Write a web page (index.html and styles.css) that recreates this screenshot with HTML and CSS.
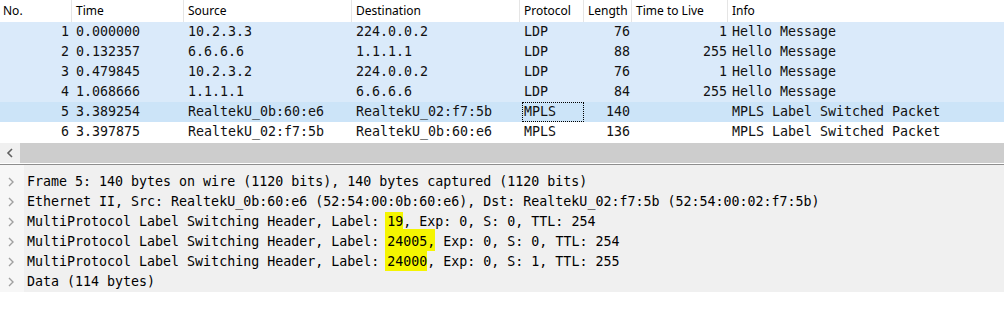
FILE: index.html
```html
<!DOCTYPE html>
<html>
<head>
<meta charset="utf-8">
<link rel="stylesheet" href="styles.css">
</head>
<body>
<div class="app">
  <div class="list">
    <div class="row hdr">
      <div class="c">No.</div>
      <div class="c">Time</div>
      <div class="c">Source</div>
      <div class="c">Destination</div>
      <div class="c">Protocol</div>
      <div class="c">Length</div>
      <div class="c">Time to Live</div>
      <div class="c last">Info</div>
    </div>
    <div class="row pkt ldp">
      <div class="c r no">1</div><div class="c">0.000000</div><div class="c">10.2.3.3</div><div class="c">224.0.0.2</div><div class="c">LDP</div><div class="c r len">76</div><div class="c r ttl">1</div><div class="c">Hello Message</div>
    </div>
    <div class="row pkt ldp">
      <div class="c r no">2</div><div class="c">0.132357</div><div class="c">6.6.6.6</div><div class="c">1.1.1.1</div><div class="c">LDP</div><div class="c r len">88</div><div class="c r ttl">255</div><div class="c">Hello Message</div>
    </div>
    <div class="row pkt ldp">
      <div class="c r no">3</div><div class="c">0.479845</div><div class="c">10.2.3.2</div><div class="c">224.0.0.2</div><div class="c">LDP</div><div class="c r len">76</div><div class="c r ttl">1</div><div class="c">Hello Message</div>
    </div>
    <div class="row pkt ldp">
      <div class="c r no">4</div><div class="c">1.068666</div><div class="c">1.1.1.1</div><div class="c">6.6.6.6</div><div class="c">LDP</div><div class="c r len">84</div><div class="c r ttl">255</div><div class="c">Hello Message</div>
    </div>
    <div class="row pkt sel">
      <div class="c r no">5</div><div class="c">3.389254</div><div class="c">RealtekU_0b:60:e6</div><div class="c">RealtekU_02:f7:5b</div><div class="c focus">MPLS</div><div class="c r len">140</div><div class="c r ttl"></div><div class="c">MPLS Label Switched Packet</div>
    </div>
    <div class="row pkt">
      <div class="c r no">6</div><div class="c">3.397875</div><div class="c">RealtekU_02:f7:5b</div><div class="c">RealtekU_0b:60:e6</div><div class="c">MPLS</div><div class="c r len">136</div><div class="c r ttl"></div><div class="c">MPLS Label Switched Packet</div>
    </div>
  </div>
  <div class="hscroll">
    <div class="arrow">
      <svg width="8" height="10" viewBox="0 0 8 10"><polyline points="6,1 2,5 6,9" fill="none" stroke="#606060" stroke-width="1.6"/></svg>
    </div>
    <div class="thumb"></div>
  </div>
  <div class="details">
    <div class="drow"><span class="chev"><svg width="8" height="10" viewBox="0 0 8 10"><polyline points="2,1 6,5 2,9" fill="none" stroke="#a0a0a0" stroke-width="1.4"/></svg></span><span class="dt">Frame 5: 140 bytes on wire (1120 bits), 140 bytes captured (1120 bits)</span></div>
    <div class="drow"><span class="chev"><svg width="8" height="10" viewBox="0 0 8 10"><polyline points="2,1 6,5 2,9" fill="none" stroke="#a0a0a0" stroke-width="1.4"/></svg></span><span class="dt">Ethernet II, Src: RealtekU_0b:60:e6 (52:54:00:0b:60:e6), Dst: RealtekU_02:f7:5b (52:54:00:02:f7:5b)</span></div>
    <div class="drow"><span class="chev"><svg width="8" height="10" viewBox="0 0 8 10"><polyline points="2,1 6,5 2,9" fill="none" stroke="#a0a0a0" stroke-width="1.4"/></svg></span><span class="dt">MultiProtocol Label Switching Header, Label: <span class="hl">19</span>, Exp: 0, S: 0, TTL: 254</span></div>
    <div class="drow"><span class="chev"><svg width="8" height="10" viewBox="0 0 8 10"><polyline points="2,1 6,5 2,9" fill="none" stroke="#a0a0a0" stroke-width="1.4"/></svg></span><span class="dt">MultiProtocol Label Switching Header, Label: <span class="hl up">24005,</span> Exp: 0, S: 0, TTL: 254</span></div>
    <div class="drow"><span class="chev"><svg width="8" height="10" viewBox="0 0 8 10"><polyline points="2,1 6,5 2,9" fill="none" stroke="#a0a0a0" stroke-width="1.4"/></svg></span><span class="dt">MultiProtocol Label Switching Header, Label: <span class="hl up">24000</span>, Exp: 0, S: 1, TTL: 255</span></div>
    <div class="drow"><span class="chev"><svg width="8" height="10" viewBox="0 0 8 10"><polyline points="2,1 6,5 2,9" fill="none" stroke="#a0a0a0" stroke-width="1.4"/></svg></span><span class="dt">Data (114 bytes)</span></div>
  </div>
</div>
</body>
</html>
```
FILE: styles.css
```css
html, body {
  margin: 0;
  padding: 0;
  background: #ffffff;
}
.app {
  width: 1004px;
  height: 325px;
  overflow: hidden;
  display: flex;
  flex-direction: column;
}
.list {
  display: flex;
  flex-direction: column;
  height: 143px;
  background: #ffffff;
}
.row {
  display: grid;
  grid-template-columns: 72px 112px 168px 168px 64px 48px 96px 1fr;
  height: 20px;
}
.hdr {
  height: 22px;
  font-family: "Noto Sans", "Open Sans", sans-serif;
  font-size: 12px;
  color: #000;
  background: #fff;
}
.hdr .c {
  line-height: 21px;
  padding-left: 4px;
  border-right: 1px solid #e5e5e5;
}
.hdr .c:first-child {
  padding-left: 3px;
}
.hdr .c.last {
  border-right: none;
}
.pkt {
  font-family: "DejaVu Sans Mono", "Liberation Mono", monospace;
  font-size: 13.3px;
  color: #111;
}
.pkt .c {
  line-height: 20px;
  padding-left: 4px;
  white-space: nowrap;
  overflow: hidden;
  box-sizing: border-box;
}
.pkt .c.r {
  text-align: right;
  padding-left: 0;
  padding-right: 2px;
}
.pkt .c.no {
  padding-right: 3px;
}
.pkt .c.ttl {
  padding-right: 1px;
}
.ldp {
  background: #daeafa;
}
.sel {
  background: #cce4f8;
}
.focus {
  outline: 1px dotted #000;
  outline-offset: -1px;
  margin-left: 2px;
  padding-left: 2px !important;
}
.hscroll {
  display: flex;
  height: 20px;
  background: #f0f0f0;
}
.arrow {
  width: 20px;
  display: flex;
  align-items: center;
  justify-content: center;
  background: #f0f0f0;
}
.thumb {
  flex: 1;
  background: #cdcdcd;
}
.details {
  margin-top: 1px;
  border-top: 1px solid #8e8e8e;
  padding-top: 7px;
  height: 120px;
  background: linear-gradient(to right, #f7f7f7 0, #f7f7f7 24px, #f0f0f0 24px);
  font-family: "DejaVu Sans Mono", "Liberation Mono", monospace;
  font-size: 13.3px;
  color: #000;
}
.drow {
  display: flex;
  align-items: center;
  height: 20px;
  line-height: 20px;
  white-space: nowrap;
}
.chev {
  width: 27px;
  display: flex;
  align-items: center;
  padding-left: 7px;
  box-sizing: border-box;
}
.hl {
  background: #f5f500;
  padding: 2px 0 2px 2px;
  margin-left: -2px;
}
.hl.up {
  padding-top: 5px;
}
```
